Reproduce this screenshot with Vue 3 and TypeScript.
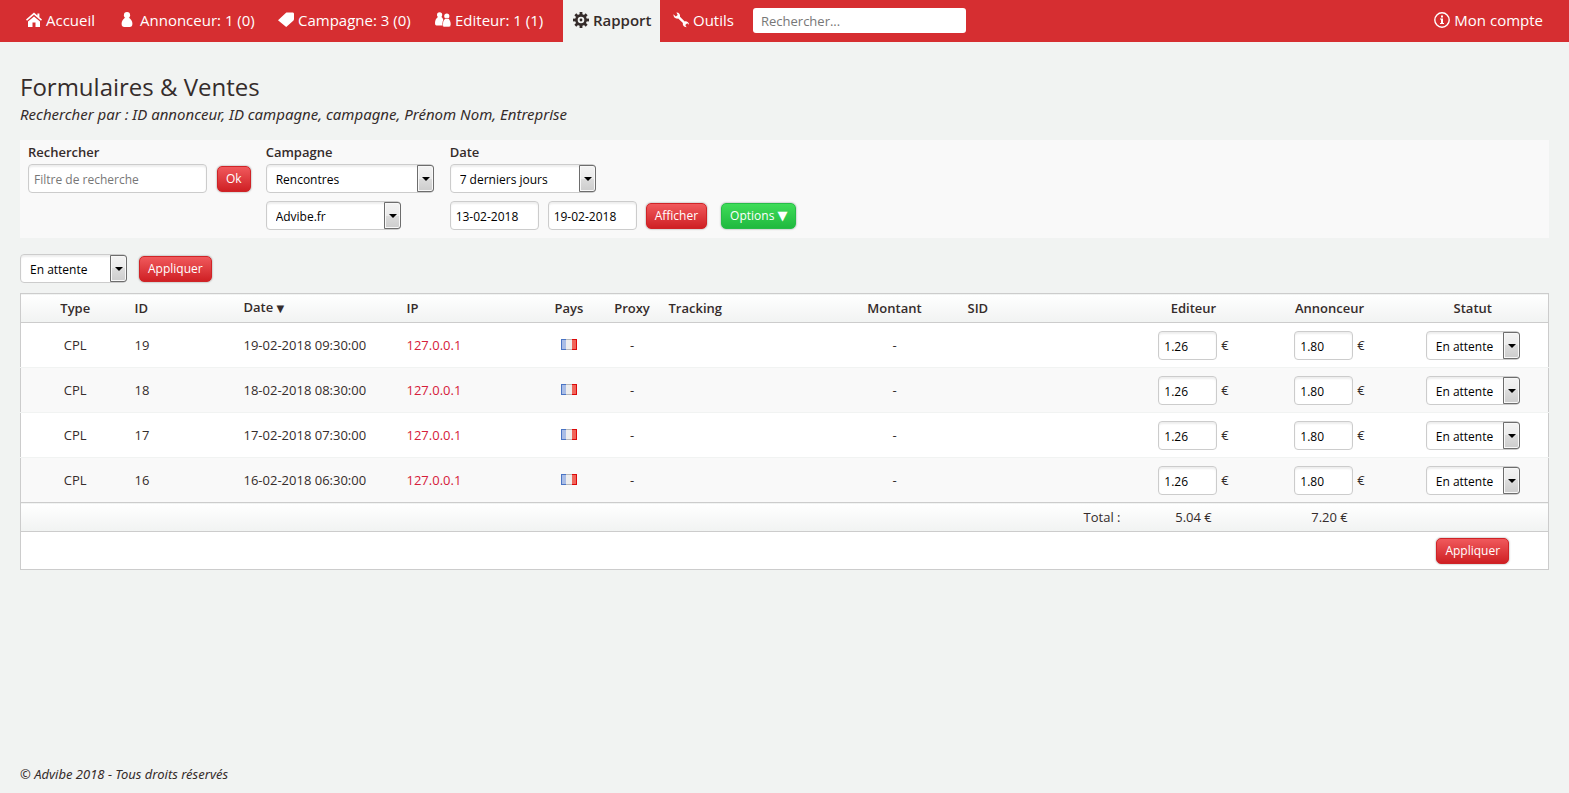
<script setup lang="ts">
import { ref } from 'vue'

interface NavItem {
  label: string
  icon: 'home' | 'user' | 'tag' | 'users' | 'cog' | 'wrench'
  active?: boolean
}

interface Lead {
  id: number
  type: string
  date: string
  ip: string
  editeur: string
  annonceur: string
  statut: string
}

const navItems: NavItem[] = [
  { label: 'Accueil', icon: 'home' },
  { label: 'Annonceur: 1 (0)', icon: 'user' },
  { label: 'Campagne: 3 (0)', icon: 'tag' },
  { label: 'Editeur: 1 (1)', icon: 'users' },
  { label: 'Rapport', icon: 'cog', active: true },
  { label: 'Outils', icon: 'wrench' },
]

const leads = ref<Lead[]>([
  { id: 19, type: 'CPL', date: '19-02-2018 09:30:00', ip: '127.0.0.1', editeur: '1.26', annonceur: '1.80', statut: 'En attente' },
  { id: 18, type: 'CPL', date: '18-02-2018 08:30:00', ip: '127.0.0.1', editeur: '1.26', annonceur: '1.80', statut: 'En attente' },
  { id: 17, type: 'CPL', date: '17-02-2018 07:30:00', ip: '127.0.0.1', editeur: '1.26', annonceur: '1.80', statut: 'En attente' },
  { id: 16, type: 'CPL', date: '16-02-2018 06:30:00', ip: '127.0.0.1', editeur: '1.26', annonceur: '1.80', statut: 'En attente' },
])

const dateFrom = ref('13-02-2018')
const dateTo = ref('19-02-2018')
const cogTeeth = [0, 45, 90, 135, 180, 225, 270, 315]
</script>

<template>
  <div class="page">
    <header class="topbar">
      <nav class="nav">
        <a v-for="item in navItems" :key="item.label" href="#" class="nav-item" :class="[item.icon, { active: item.active }]">
          <svg class="icon" viewBox="0 0 16 16" aria-hidden="true">
            <g v-if="item.icon === 'home'">
              <path d="M8 .6 0 7.600l1 1.200L8 2.800l7 6 1-1.200-2.600-2.300V1.600h-2v2z" />
              <path d="M8 4.400 2 9.500V15h4.500v-4.500h3V15H14V9.500z" />
            </g>
            <g v-else-if="item.icon === 'user'">
              <circle cx="7" cy="3.200" r="3.100" />
              <path d="M5 5.800h4c2.200 1.500 3.400 3.600 3.400 6 0 2.200-1 3.200-2.700 3.200H4.300c-1.700 0-2.700-1-2.700-3.200 0-2.400 1.200-4.500 3.400-6z" />
            </g>
            <path v-else-if="item.icon === 'tag'" d="M0 8.300 7.800.9C8.200.5 8.600.4 9.100.4h5.500c.8 0 1.400.6 1.400 1.400v5.300c0 .5-.2 1-.5 1.300L8.200 15z" />
            <g v-else-if="item.icon === 'users'">
              <circle cx="4.600" cy="2.800" r="2.600" />
              <circle cx="11.800" cy="4" r="2.600" />
              <path d="M2.900 5.100h3.600c1.400 1.200 2.200 2.900 2.200 5L8 13.500H1.500C.5 13.500 0 12.700 0 11c0-2.400 1-4.400 2.900-5.900z" />
              <path d="M10.200 6.400h3.200c1.700 1.300 2.600 3.300 2.600 5.700 0 1.900-.8 2.900-2 2.900H9.300c-1.200 0-1.800-.9-1.800-2.600 0-2.500 1-4.600 2.700-6z" class="front" />
            </g>
            <g v-else-if="item.icon === 'cog'">
              <rect v-for="a in cogTeeth" :key="a" x="6.600" y="0" width="2.800" height="4" :transform="`rotate(${a} 8 8)`" />
              <circle cx="8" cy="8" r="4.600" fill="none" class="ring" />
              <circle cx="8" cy="8" r="1.400" />
            </g>
            <path v-else d="M.4 2.300 2.800 4.500 4.700 3 3.400.5C5.700.3 7.500 2 7 4.800l4.700 4.600c2.200-.4 4.300 1 4.300 3.400l-1.800-1.500-1.900 1.600 1.300 2.300c-2.500 0-4.200-1.700-3.700-4.100L5.200 6.600C2.400 7.100.3 5.200.4 2.300z" />
          </svg>
          <span>{{ item.label }}</span>
        </a>
      </nav>
      <input class="top-search" type="search" placeholder="Rechercher..." aria-label="Rechercher sur le site" />
      <a href="#" class="account">
        <svg class="icon" viewBox="0 0 16 16" aria-hidden="true">
          <circle cx="8" cy="8" r="7.200" fill="none" class="outline" />
          <rect x="7" y="3.500" width="2" height="2" />
          <path d="M6 6.500h3V11h1v1H6v-1h1V7.500H6z" />
        </svg>
        <span>Mon compte</span>
      </a>
    </header>

    <main class="content">
      <h1>Formulaires &amp; Ventes</h1>
      <p class="subtitle">Rechercher par : ID annonceur, ID campagne, campagne, Prénom Nom, Entreprise</p>

      <form class="filters" @submit.prevent>
        <div class="group">
          <label for="q">Rechercher</label>
          <div class="line">
            <input id="q" class="field wide" type="text" placeholder="Filtre de recherche" />
            <button class="btn red" type="submit">Ok</button>
          </div>
        </div>
        <div class="group campaign">
          <label for="campaign">Campagne</label>
          <span class="select w-campaign">
            <select id="campaign"><option>Rencontres</option></select><i class="arrow"></i>
          </span>
          <span class="select w-site">
            <select aria-label="Site"><option>Advibe.fr</option></select><i class="arrow"></i>
          </span>
        </div>
        <div class="group">
          <label for="period">Date</label>
          <span class="select w-period">
            <select id="period"><option>7 derniers jours</option></select><i class="arrow"></i>
          </span>
          <div class="line dates">
            <input v-model="dateFrom" class="field date" type="text" aria-label="Date de début" />
            <input v-model="dateTo" class="field date" type="text" aria-label="Date de fin" />
            <button class="btn red show" type="submit">Afficher</button>
            <button class="btn green" type="button">Options <span class="caret">▼</span></button>
          </div>
        </div>
      </form>

      <div class="bulk">
        <span class="select w-bulk">
          <select aria-label="Statut à appliquer"><option>En attente</option></select><i class="arrow"></i>
        </span>
        <button class="btn red" type="button">Appliquer</button>
      </div>

      <table class="leads">
        <colgroup>
          <col class="c-type" /><col class="c-type" /><col class="c-date" /><col class="c-money" />
          <col class="c-small" /><col class="c-small" /><col class="c-date" /><col class="c-money" />
          <col class="c-date" /><col class="c-money" /><col class="c-money" /><col class="c-status" />
        </colgroup>
        <thead>
          <tr>
            <th class="mid">Type</th>
            <th>ID</th>
            <th>Date <span class="sort">▼</span></th>
            <th>IP</th>
            <th class="mid">Pays</th>
            <th class="mid">Proxy</th>
            <th>Tracking</th>
            <th class="mid">Montant</th>
            <th>SID</th>
            <th class="mid">Editeur</th>
            <th class="mid">Annonceur</th>
            <th class="mid">Statut</th>
          </tr>
        </thead>
        <tbody>
          <tr v-for="lead in leads" :key="lead.id">
            <td class="mid">{{ lead.type }}</td>
            <td>{{ lead.id }}</td>
            <td>{{ lead.date }}</td>
            <td><a href="#" class="ip">{{ lead.ip }}</a></td>
            <td class="mid">
              <svg class="flag" viewBox="0 0 16 11" role="img" aria-label="France">
                <rect width="5" height="11" fill="#4a74c4" />
                <rect x="1" y="1" width="4" height="9" fill="#a9bde6" />
                <rect x="5" width="6" height="11" fill="#b9b9b9" />
                <rect x="5" y="1" width="6" height="9" fill="#ededed" />
                <rect x="11" width="5" height="11" fill="#dd0a0a" />
                <rect x="11" y="1" width="4" height="9" fill="#f0655a" />
              </svg>
            </td>
            <td class="mid">-</td>
            <td></td>
            <td class="mid">-</td>
            <td></td>
            <td class="mid">
              <span class="amount"><input v-model="lead.editeur" class="field money" type="text" :aria-label="`Editeur ${lead.id}`" />€</span>
            </td>
            <td class="mid">
              <span class="amount"><input v-model="lead.annonceur" class="field money" type="text" :aria-label="`Annonceur ${lead.id}`" />€</span>
            </td>
            <td class="mid">
              <span class="select w-status">
                <select v-model="lead.statut" :aria-label="`Statut ${lead.id}`"><option>En attente</option></select><i class="arrow"></i>
              </span>
            </td>
          </tr>
        </tbody>
        <tfoot>
          <tr class="totals">
            <td colspan="9" class="end">Total :</td>
            <td class="mid">5.04 €</td>
            <td class="mid">7.20 €</td>
            <td></td>
          </tr>
          <tr class="apply">
            <td colspan="11"></td>
            <td class="mid"><button class="btn red" type="button">Appliquer</button></td>
          </tr>
        </tfoot>
      </table>
    </main>

    <footer class="footer">© Advibe 2018 - Tous droits réservés</footer>
  </div>
</template>

<style>
body {
  margin: 0;
  background: #f1f3f2;
}
</style>

<style scoped>
.page {
  display: flex;
  flex-direction: column;
  min-height: 100vh;
  box-sizing: border-box;
  font-family: "Trebuchet MS", "Open Sans", sans-serif;
  font-size: 13px;
  line-height: 18px;
  color: #352c2b;
}

.topbar {
  display: flex;
  align-items: center;
  height: 42px;
  padding: 0 16px;
  background: #d62e31;
  font-size: 15px;
}

.nav {
  display: grid;
  grid-template-columns: 94px 158px 157px 138px 97px 93px;
  height: 100%;
}

.nav-item,
.account {
  display: flex;
  align-items: center;
  gap: 4px;
  padding: 0 10px 2px;
  color: #fff;
  white-space: nowrap;
  text-decoration: none;
}

.nav-item.active {
  background: #f1f3f2;
  color: #352c2b;
  font-weight: 600;
}

.nav-item.wrench {
  padding-left: 13px;
}

.icon {
  flex: none;
  width: 16px;
  height: 16px;
  fill: currentColor;
}

.icon .front {
  stroke: #d62e31;
  stroke-width: 0.6;
}

.icon .ring {
  stroke: currentColor;
  stroke-width: 2.6;
}

.icon .outline {
  stroke: currentColor;
  stroke-width: 1.4;
}

.top-search {
  width: 213px;
  height: 25px;
  box-sizing: border-box;
  margin: 0 0 1px;
  padding: 0 8px;
  border: 0;
  border-radius: 3px;
  background: #fff;
  font: 13px "Open Sans", sans-serif;
}

.top-search::placeholder,
.field::placeholder {
  color: #777;
  opacity: 1;
}

.account {
  margin-left: auto;
}

.content {
  flex: 1;
  padding: 30px 20px 0;
}

h1 {
  margin: 0;
  font-size: 24px;
  font-weight: 400;
  line-height: 30px;
}

.subtitle {
  margin: 0 0 14px;
  font-family: "Trebuchet MS", "Noto Sans", sans-serif;
  font-size: 15px;
  font-style: italic;
  line-height: 24px;
}

.filters {
  display: flex;
  align-items: flex-start;
  gap: 15px;
  padding: 4px 8px 8px;
  background: #f9f9f9;
}

.group {
  display: flex;
  flex-direction: column;
  align-items: flex-start;
}

.campaign {
  margin-right: 1px;
}

.group label {
  margin-bottom: 3px;
  font-weight: 600;
  line-height: 17px;
}

.group > .select + .select,
.group > .dates {
  margin-top: 8px;
}

.line {
  display: flex;
  align-items: center;
  gap: 10px;
}

.dates {
  gap: 9px;
}

.show {
  margin-right: 5px;
}

.field,
.select select {
  box-sizing: border-box;
  height: 29px;
  border: 1px solid #ccc;
  border-radius: 4px;
  background: #fff;
  box-shadow: inset 0 2px 2px rgba(0, 0, 0, 0.07);
  color: #000;
  font-family: Tahoma, "Open Sans", sans-serif;
  font-size: 12px;
}

.field {
  padding: 2px 5px 0;
}

.wide {
  width: 179px;
}

.date {
  width: 89px;
}

.money {
  width: 59px;
}

.select {
  position: relative;
  display: inline-block;
  height: 29px;
}

.select select {
  display: block;
  width: 100%;
  margin: 0;
  padding: 2px 20px 0 9px;
  appearance: none;
}

.arrow {
  position: absolute;
  top: 1px;
  right: 0;
  bottom: 1px;
  width: 17px;
  box-sizing: border-box;
  border: 1px solid #6d6d6d;
  border-radius: 0 3px 3px 0;
  background: linear-gradient(#f3f3f3, #ebebeb 50%, #dcdcdc 50%, #cdcdcd);
  box-shadow: inset 0 0 0 1px #f8f8f8;
  pointer-events: none;
}

.arrow::after {
  content: "";
  position: absolute;
  top: 11px;
  left: 4px;
  border: 4px solid transparent;
  border-top-color: #000;
  border-bottom: 0;
}

.w-campaign {
  width: 168px;
}

.w-site {
  width: 135px;
}

.w-period {
  width: 146px;
}

.w-bulk {
  width: 107px;
}

.w-status {
  width: 94px;
}

.btn {
  height: 26px;
  box-sizing: border-box;
  padding: 0 8px;
  border-radius: 5px;
  color: #fff;
  font-family: Tahoma, "Open Sans", sans-serif;
  font-size: 12px;
  white-space: nowrap;
  box-shadow: 0 0 2px rgba(0, 0, 0, 0.45);
}

.red {
  border: 1px solid #cf2427;
  background: linear-gradient(#f0595c, #cf2024);
}

.green {
  border: 1px solid #27bd48;
  background: linear-gradient(#3fdc58, #20b93f);
}

.caret {
  font-family: "DejaVu Sans", sans-serif;
  font-size: 13px;
  line-height: 1;
}

.bulk {
  display: flex;
  align-items: center;
  gap: 12px;
  margin: 16px 0 10px;
}

.leads {
  width: 100%;
  table-layout: fixed;
  border-collapse: collapse;
  border: 1px solid #ccc;
  background: #fff;
}

.c-type {
  width: 109px;
}

.c-date {
  width: 163px;
}

.c-money {
  width: 136px;
}

.c-small {
  width: 63px;
}

.c-status {
  width: 151px;
}

th,
td {
  box-sizing: border-box;
  padding: 0 5px;
  text-align: left;
  white-space: nowrap;
}

th {
  font-weight: 600;
}

.sort {
  font-family: "DejaVu Sans", sans-serif;
  font-size: 10px;
}

.mid {
  text-align: center;
}

.end {
  text-align: right;
}

thead tr,
.totals {
  height: 29px;
  border-top: 1px solid #ccc;
  border-bottom: 1px solid #ccc;
  background: linear-gradient(#fff, #f1f3f2);
}

tbody tr {
  height: 45px;
}

tbody tr + tr {
  border-top: 1px solid #f1f3f2;
}

tbody tr:nth-child(even) {
  background: #f9f9f9;
}

.apply {
  height: 38px;
}

.ip {
  color: #d6203a;
  text-decoration: none;
}

.flag {
  width: 16px;
  height: 11px;
}

.amount {
  display: inline-flex;
  align-items: center;
  gap: 4px;
}

td .select {
  vertical-align: middle;
}

.footer {
  padding: 0 20px 10px;
  font-family: "Trebuchet MS", "Noto Sans", sans-serif;
  font-style: italic;
}
</style>
